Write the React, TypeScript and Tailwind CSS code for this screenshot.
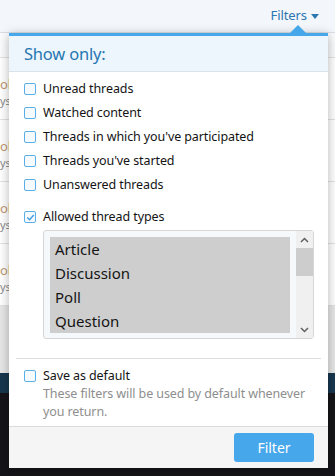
import React from "react";

function Box({ checked = false }: { checked?: boolean }) {
  return (
    <span className="w-3 h-3 shrink-0 rounded-[2px] border-[1.5px] border-[#5aaeea] bg-[#f6fbff] flex items-center justify-center">
      {checked && (
        <svg width="9" height="9" viewBox="0 0 9 9">
          <path d="M1.3 4.6 L3.6 6.8 L7.8 2" fill="none" stroke="#3f9ae0" strokeWidth="1.4" />
        </svg>
      )}
    </span>
  );
}

function Row({ label, checked }: { label: string; checked?: boolean }) {
  return (
    <div className="flex items-center gap-[7px] h-6 pl-[15px]">
      <Box checked={checked} />
      <span className="text-[12.5px] tracking-[-0.1px] text-[#141414] leading-6">{label}</span>
    </div>
  );
}

function BgRow() {
  return (
    <div className="h-[62px] border-b border-[#e2e2e2] flex flex-col justify-center pt-[6px]">
      <div className="text-[13px] leading-[17px] text-[#c09a72] whitespace-nowrap">oli</div>
      <div className="text-[11px] leading-[15px] text-[#8a8a8a] whitespace-nowrap">ys:</div>
    </div>
  );
}

export default function App() {
  return (
    <div className="relative w-[335px] h-[476px] overflow-hidden bg-white font-['Noto_Sans',sans-serif]">
      {/* background page */}
      <div className="flex flex-col h-full">
        <div className="h-[33px] shrink-0 bg-[#f3f6fa] border-b border-[#d9dee4] flex items-center justify-end pr-[16px]">
          <span className="text-[13px] tracking-[-0.1px] text-[#2b77b0]">Filters</span>
          <svg width="8" height="5" viewBox="0 0 8 5" className="ml-[4px] mt-[1px]">
            <path d="M0 0 H8 L4 5 Z" fill="#2b77b0" />
          </svg>
        </div>
        <div className="h-[25px] shrink-0 border-b border-[#e2e2e2] bg-[#fafbfc]" />
        <BgRow />
        <BgRow />
        <BgRow />
        <BgRow />
        <div className="h-[67px] shrink-0 bg-[#e6e6e6]" />
        <div className="h-[20px] shrink-0 bg-[#17374f]" />
        <div className="flex-1 bg-[#151519]" />
      </div>

      {/* popup */}
      <div className="absolute left-[9px] top-[25px] w-[319px]">
        <div className="flex justify-end pr-[22px] h-[8px]">
          <svg width="16" height="8" viewBox="0 0 16 8">
            <path d="M0 8 L8 0 L16 8 Z" fill="#47a7eb" />
          </svg>
        </div>
        <div className="border-t-[3px] border-[#47a7eb] bg-white shadow-[0_2px_10px_rgba(0,0,0,0.3)]">
          <div className="h-[36px] bg-[#edf5fd] border-b border-[#d8e3ee] flex items-center pl-[15px] pt-[2px]">
            <span className="text-[16.5px] tracking-[-0.2px] text-[#2577b1]">Show only:</span>
          </div>
          <div className="pt-[5px]">
            <Row label="Unread threads" />
            <Row label="Watched content" />
            <Row label="Threads in which you've participated" />
            <Row label="Threads you've started" />
            <Row label="Unanswered threads" />
            <div className="mt-[8px]">
              <Row label="Allowed thread types" checked />
            </div>
            <div className="ml-[34px] mr-[14px] mt-[1px] h-[109px] border border-[#d6d6d6] rounded-[3px] bg-[#f6f9fc] flex pl-[6px] pt-[6px] pb-[5px] gap-[6px]">
              <div className="flex-1 bg-[#cecece] flex flex-col">
                {["Article", "Discussion", "Poll", "Question"].map((o) => (
                  <div key={o} className="h-6 leading-6 pl-[5px] text-[15px] text-[#141414]">
                    {o}
                  </div>
                ))}
              </div>
              <div className="w-[17px] -mt-[6px] -mb-[5px] bg-[#f0f0f0] flex flex-col items-center">
                <div className="h-[17px] flex items-center justify-center">
                  <svg width="9" height="6" viewBox="0 0 9 6">
                    <path d="M1 5 L4.5 1.5 L8 5" fill="none" stroke="#606060" strokeWidth="1.5" />
                  </svg>
                </div>
                <div className="w-full h-[28px] bg-[#cdcdcd]" />
                <div className="flex-1" />
                <div className="h-[17px] flex items-center justify-center">
                  <svg width="9" height="6" viewBox="0 0 9 6">
                    <path d="M1 1 L4.5 4.5 L8 1" fill="none" stroke="#606060" strokeWidth="1.5" />
                  </svg>
                </div>
              </div>
            </div>
            <div className="mx-[7px] mt-[19px] border-t border-[#dedede]" />
            <div className="pt-[8px] pb-[5px]">
              <div className="flex items-center gap-[7px] h-[18px] pl-[15px]">
                <Box />
                <span className="text-[12.5px] tracking-[-0.1px] text-[#141414]">Save as default</span>
              </div>
              <div className="pl-[34px] pr-[12px] text-[12.5px] tracking-[-0.1px] leading-[18px] text-[#8e8e8e]">
                These filters will be used by default whenever you return.
              </div>
            </div>
          </div>
          <div className="h-[42px] bg-[#f5f5f5] border-t border-[#dcdcdc] flex items-center justify-end pr-[14px]">
            <button className="w-[80px] h-[29px] rounded-[3px] bg-[#47a7eb] text-white text-[14px]">Filter</button>
          </div>
        </div>
      </div>
    </div>
  );
}
